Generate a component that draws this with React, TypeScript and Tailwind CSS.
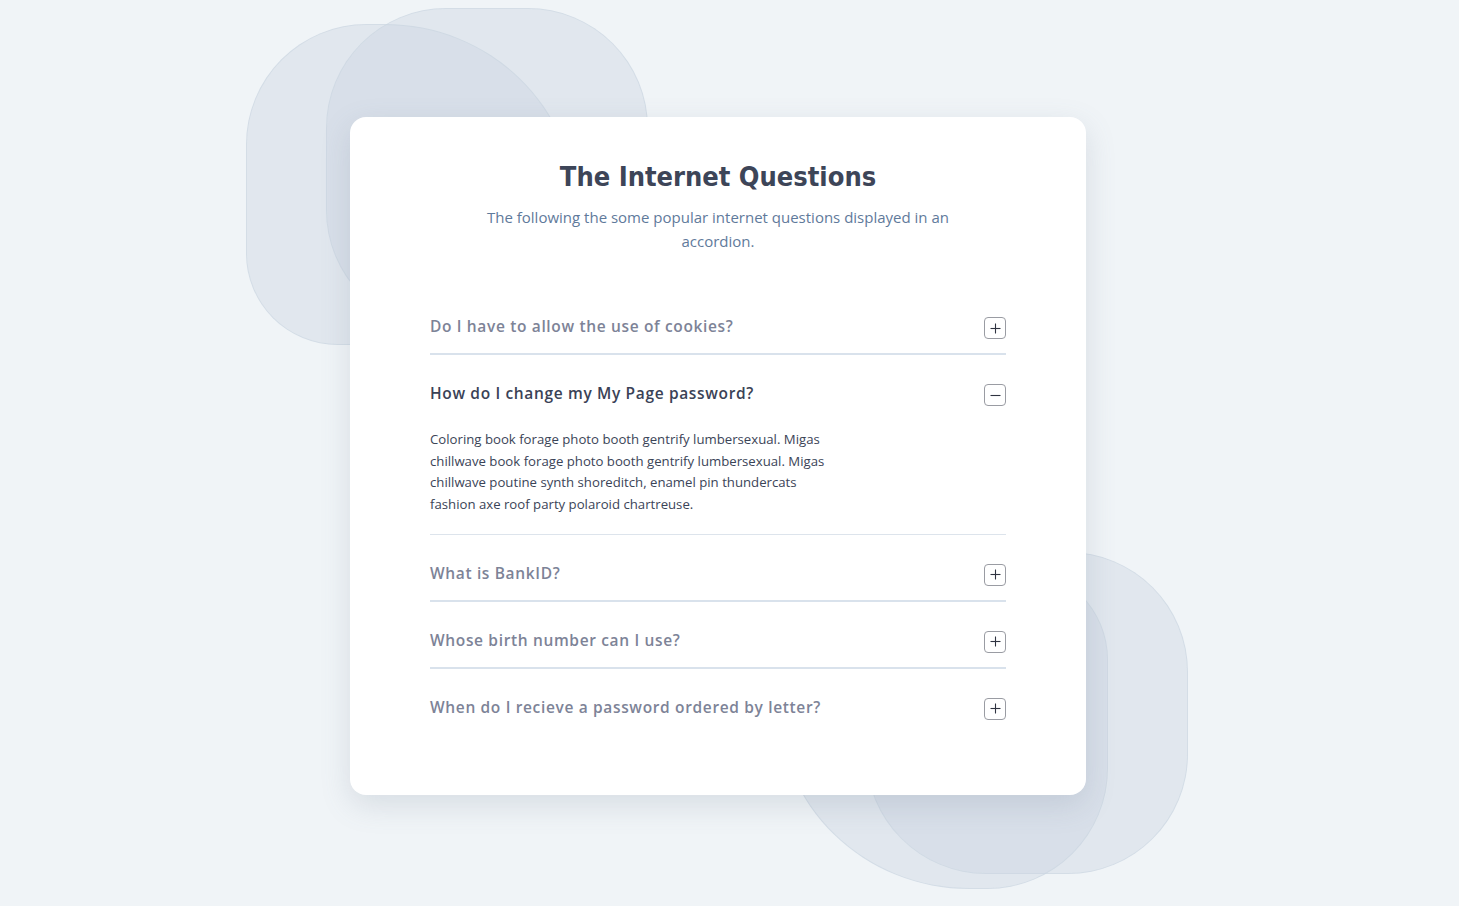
import { useState } from "react";

const faqs = [
  {
    q: "Do I have to allow the use of cookies?",
    a: "Coloring book forage photo booth gentrify lumbersexual. Migas chillwave book forage photo booth gentrify lumbersexual. Migas chillwave poutine synth shoreditch, enamel pin thundercats fashion axe roof party polaroid chartreuse.",
  },
  {
    q: "How do I change my My Page password?",
    a: "Coloring book forage photo booth gentrify lumbersexual. Migas chillwave book forage photo booth gentrify lumbersexual. Migas chillwave poutine synth shoreditch, enamel pin thundercats fashion axe roof party polaroid chartreuse.",
  },
  {
    q: "What is BankID?",
    a: "Coloring book forage photo booth gentrify lumbersexual. Migas chillwave book forage photo booth gentrify lumbersexual. Migas chillwave poutine synth shoreditch, enamel pin thundercats fashion axe roof party polaroid chartreuse.",
  },
  {
    q: "Whose birth number can I use?",
    a: "Coloring book forage photo booth gentrify lumbersexual. Migas chillwave book forage photo booth gentrify lumbersexual. Migas chillwave poutine synth shoreditch, enamel pin thundercats fashion axe roof party polaroid chartreuse.",
  },
  {
    q: "When do I recieve a password ordered by letter?",
    a: "Coloring book forage photo booth gentrify lumbersexual. Migas chillwave book forage photo booth gentrify lumbersexual. Migas chillwave poutine synth shoreditch, enamel pin thundercats fashion axe roof party polaroid chartreuse.",
  },
];

function ToggleIcon({ open }: { open: boolean }) {
  return (
    <span className="flex h-[22px] w-[22px] shrink-0 translate-y-[2px] items-center justify-center rounded-[4px] border border-[#9a9ca3] bg-white">
      <svg width="11" height="11" viewBox="0 0 11 11" fill="none" stroke="#2f3340" strokeWidth="1.1">
        <path d="M0.5 5.5h10" />
        {!open && <path d="M5.5 0.5v10" />}
      </svg>
    </span>
  );
}

export default function App() {
  const [open, setOpen] = useState<number | null>(1);

  return (
    <div className="relative min-h-[906px] w-full overflow-hidden bg-[#f0f4f7] font-['Open_Sans',sans-serif]">
      {/* decorative blobs */}
      <div className="absolute left-[246px] top-[24px] h-[321px] w-[330px] rounded-[125px_60%_140px_95px] border border-[#cbd5e1]/60 bg-[#cbd5e1]/40" />
      <div className="absolute left-[326px] top-[8px] h-[322px] w-[322px] rounded-[120px] border border-[#cbd5e1]/60 bg-[#cbd5e1]/40" />
      <div className="absolute left-[778px] top-[568px] h-[321px] w-[330px] rounded-[140px_95px_125px_60%] border border-[#cbd5e1]/60 bg-[#cbd5e1]/40" />
      <div className="absolute left-[866px] top-[552px] h-[322px] w-[322px] rounded-[120px] border border-[#cbd5e1]/60 bg-[#cbd5e1]/40" />

      <div className="relative flex justify-center pr-[23px] pt-[117px]">
        <div className="w-[736px] rounded-[16px] bg-white px-20 pb-[61px] pt-[42px] shadow-[0_10px_30px_rgba(100,116,139,0.18)]">
          <div className="text-center">
            <h1 className="font-['DejaVu_Sans_Condensed','DejaVu_Sans',sans-serif] text-[27px] font-bold leading-[36px] text-[#3d4558]">
              The Internet Questions
            </h1>
            <p className="mx-auto mt-[10px] max-w-[480px] text-[15px] leading-[24px] text-[#5f7a9b]">
              The following the some popular internet questions displayed in an accordion.
            </p>
          </div>

          <div className="mt-[35px]">
            {faqs.map((item, i) => {
              const isOpen = open === i;
              const last = i === faqs.length - 1;
              return (
                <div
                  key={item.q}
                  className={last ? "" : isOpen ? "border-b border-[#dde4ec]" : "border-b-2 border-[#d9e2ec]"}
                >
                  <button
                    type="button"
                    onClick={() => setOpen(isOpen ? null : i)}
                    className="flex w-full items-center justify-between pb-[16px] pt-[27px] text-left"
                  >
                    <span
                      className={
                        "text-[15.5px] font-semibold leading-[22px] tracking-[0.65px] " +
                        (isOpen ? "text-[#3a4256]" : "text-[#7d8397]")
                      }
                    >
                      {item.q}
                    </span>
                    <ToggleIcon open={isOpen} />
                  </button>
                  {isOpen && (
                    <p className="max-w-[400px] pb-[18px] pt-[9px] text-[13.2px] leading-[21.7px] text-[#3b4457]">
                      {item.a}
                    </p>
                  )}
                </div>
              );
            })}
          </div>
        </div>
      </div>
    </div>
  );
}
